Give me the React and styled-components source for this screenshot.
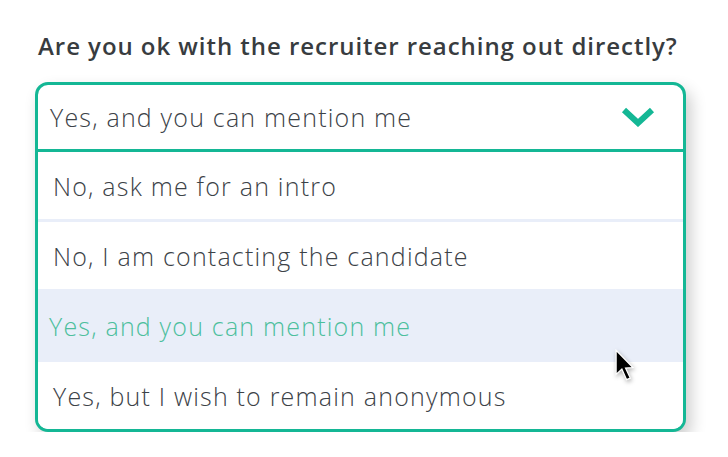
import React from 'react';
import styled, { createGlobalStyle } from 'styled-components';

const GlobalStyle = createGlobalStyle`
    html, body {
        margin: 0;
        padding: 0;
        background: #fff;
    }
    body {
        font-family: "Open Sans", Lato, sans-serif;
        color: #3c4247;
    }
`;

const OPTIONS = [
    'No, ask me for an intro',
    'No, I am contacting the candidate',
    'Yes, and you can mention me',
    'Yes, but I wish to remain anonymous',
];

const SELECTED = 2;

export default function App() {
    return (
        <Page>
            <GlobalStyle />
            <Question>Are you ok with the recruiter reaching out directly?</Question>
            <Select>
                <Trigger>
                    <Value>{OPTIONS[SELECTED]}</Value>
                    <Chevron viewBox="0 0 34 20">
                        <polyline points="3,3 17,16 31,3" />
                    </Chevron>
                </Trigger>
                <Menu>
                    {OPTIONS.map((opt, i) => (
                        <Option key={opt} $first={i === 0} $active={i === SELECTED}>
                            {opt}
                            {i === SELECTED && (
                                <Cursor viewBox="0 0 20 32">
                                    <path d="M2 1 L2 24 L7.5 19 L12 29 L15.5 27.5 L11 18 L18 17.5 Z" />
                                </Cursor>
                            )}
                        </Option>
                    ))}
                </Menu>
            </Select>
        </Page>
    );
}

const Page = styled.div`
    padding: 27px 48px 0 35px;
    display: flex;
    flex-direction: column;
    gap: 18px;
`;

const Question = styled.h1`
    margin: 0 0 0 3px;
    font-size: 24px;
    font-weight: 600;
    line-height: 37px;
    letter-spacing: 0.95px;
    white-space: nowrap;
    color: #383c40;
`;

const Select = styled.div`
    width: 645px;
    border: 3px solid #14b795;
    border-radius: 13px;
    background: #fff;
    overflow: hidden;
    box-shadow: 5px 8px 16px rgba(0, 0, 0, 0.2);
`;

const Trigger = styled.div`
    height: 64px;
    display: flex;
    align-items: center;
    justify-content: space-between;
    padding: 0 28px 0 12px;
    border-bottom: 3px solid #14b795;
`;

const Value = styled.span`
    font-size: 25px;
    font-weight: 300;
    letter-spacing: 1.2px;
    color: #3c4247;
`;

const Chevron = styled.svg`
    width: 34px;
    height: 20px;
    fill: none;
    stroke: #14b795;
    stroke-width: 6;
`;

const Menu = styled.div`
    display: flex;
    flex-direction: column;
`;

const Option = styled.div`
    position: relative;
    height: 67px;
    display: flex;
    align-items: center;
    padding-left: ${p => (p.$active ? '11px' : '15px')};
    border-top: ${p => (p.$first ? 'none' : '3px solid #e9eef9')};
    background: ${p => (p.$active ? '#e9eef9' : '#fff')};
    color: ${p => (p.$active ? '#4dbf9d' : '#3c4247')};
    font-size: 25px;
    font-weight: 300;
    letter-spacing: 1.2px;
`;

const Cursor = styled.svg`
    position: absolute;
    z-index: 2;
    left: 576px;
    top: 57px;
    width: 21px;
    height: 34px;
    fill: #000;
    stroke: #fff;
    stroke-width: 1.2;
    filter: drop-shadow(1px 2px 2px rgba(0, 0, 0, 0.3));
`;
